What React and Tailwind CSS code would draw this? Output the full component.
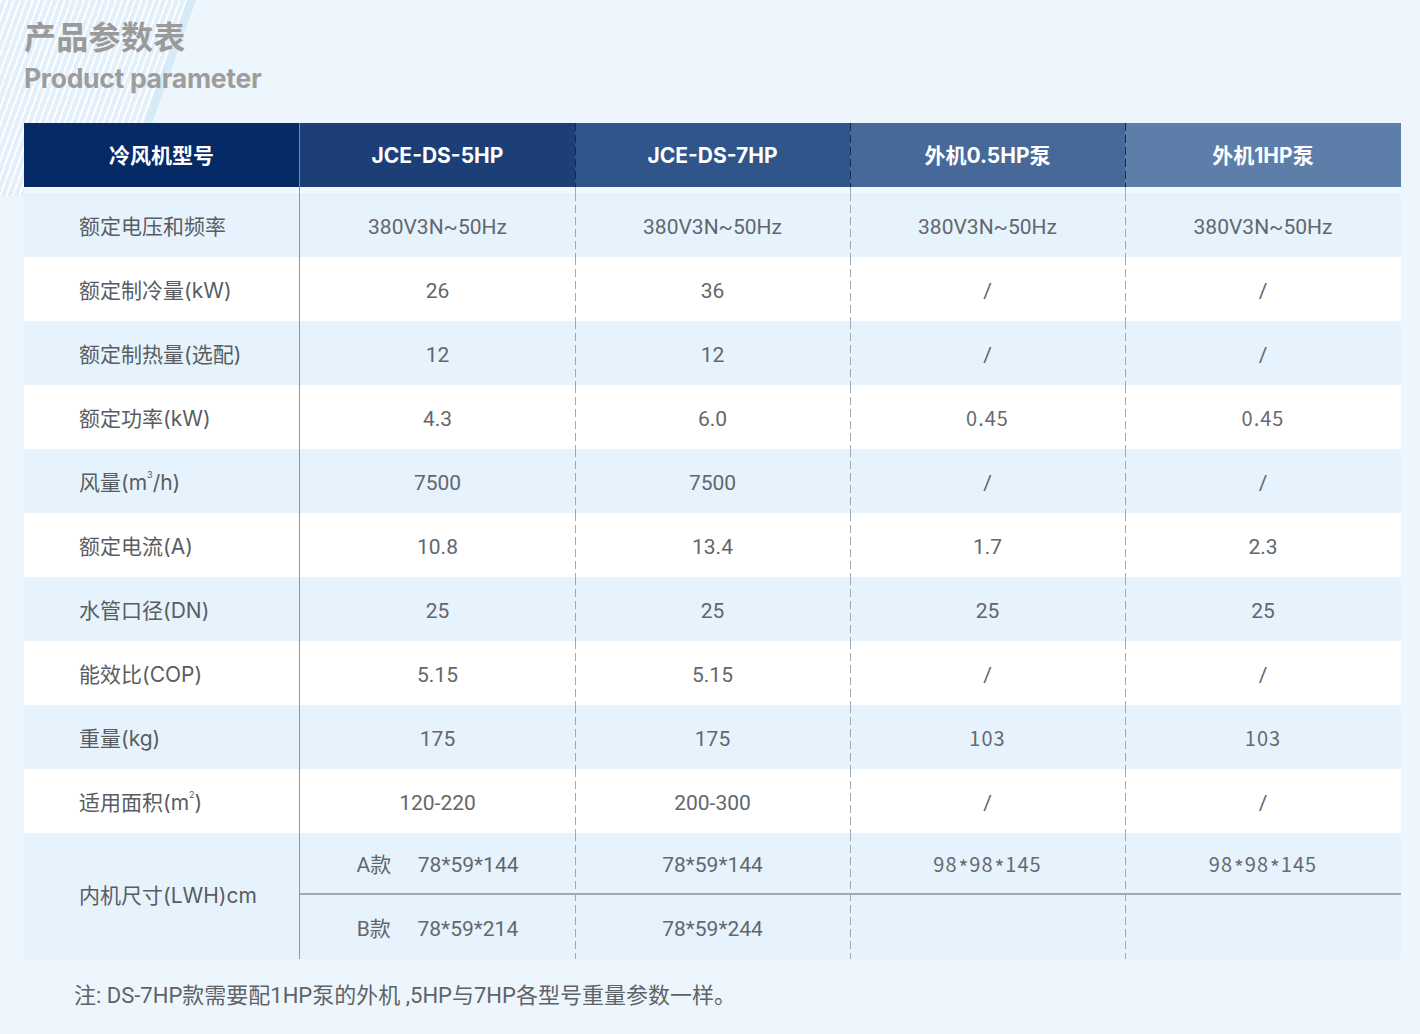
import React from "react";

const headers = ["冷风机型号", "JCE-DS-5HP", "JCE-DS-7HP", "外机0.5HP泵", "外机1HP泵"];
const headBg = ["bg-[#062a66]", "bg-[#1b3f76]", "bg-[#2f558a]", "bg-[#47699a]", "bg-[#5d7ea9]"];

// wide = values drawn in the wider CJK digit face in the picture
const rows = [
    { label: "额定电压和频率", cells: ["380V3N~50Hz", "380V3N~50Hz", "380V3N~50Hz", "380V3N~50Hz"] },
    { label: "额定制冷量(kW)", cells: ["26", "36", "/", "/"] },
    { label: "额定制热量(选配)", cells: ["12", "12", "/", "/"] },
    { label: "额定功率(kW)", cells: ["4.3", "6.0", "0.45", "0.45"], wide: [2, 3] },
    { label: <>风量(m<sup className="text-[9px] -top-[8px]">3</sup>/h)</>, cells: ["7500", "7500", "/", "/"] },
    { label: "额定电流(A)", cells: ["10.8", "13.4", "1.7", "2.3"] },
    { label: "水管口径(DN)", cells: ["25", "25", "25", "25"] },
    { label: "能效比(COP)", cells: ["5.15", "5.15", "/", "/"] },
    { label: "重量(kg)", cells: ["175", "175", "103", "103"], wide: [2, 3] },
    { label: <>适用面积(m<sup className="text-[9px] -top-[8px]">2</sup>)</>, cells: ["120-220", "200-300", "/", "/"] },
];

const cols = "grid grid-cols-[275px_276px_275px_275px_276px]";
const sepSolid = "border-l-[1.5px] border-solid border-[#8d96a1]";
// long dashes drawn as a 1px strip on the cell's left edge
const sepDash =
    "relative before:content-[''] before:absolute before:left-0 before:top-0 before:bottom-0 before:w-px before:bg-[repeating-linear-gradient(to_bottom,#a0a8b2_0_8px,transparent_8px_12px)]";
const sepDashHead =
    "relative before:content-[''] before:absolute before:left-0 before:top-0 before:bottom-0 before:w-px before:bg-[repeating-linear-gradient(to_bottom,#1a2945_0_8px,transparent_8px_12px)]";

function sep(i) {
    if (i === 0) return "";
    return i === 1 ? sepSolid : sepDash;
}

const valueFont = "pt-[6px] font-['Roboto','Noto_Sans_CJK_SC',sans-serif] text-[21px] text-[#62676d]";
const wideFont = "pt-[1px] font-['Noto_Sans_CJK_SC',sans-serif] text-[20px] tracking-[1px] text-[#666a70]";

function Dims({ parts }) {
    return (
        <>
            {parts.map((p, i) => (
                <React.Fragment key={i}>
                    {i > 0 && <span className="relative top-[4px] mx-[1px] text-[21px] tracking-[0px]">*</span>}
                    {p}
                </React.Fragment>
            ))}
        </>
    );
}

export default function App() {
    return (
        <div className="relative w-[1420px] h-[1034px] overflow-hidden bg-[#eef6fd] font-['Inter','Noto_Sans_CJK_SC',sans-serif] text-[#5f5f5f]">
            {/* striped decoration */}
            <div className="absolute left-0 top-0 w-[200px] h-[200px] [clip-path:polygon(0_0,196px_0,126px_196px,0_196px)] bg-[repeating-linear-gradient(110deg,rgba(255,255,255,0.85)_0_2px,rgba(214,232,246,0.45)_2px_6px)]" />
            <div className="absolute left-0 top-0 w-[200px] h-[200px] [clip-path:polygon(187px_0,196px_0,126px_196px,119px_196px)] bg-[#d6eaf7]" />

            <div className="relative px-[24px] pt-[18px]">
                <div className="text-[32px] leading-[40px] font-bold text-[#9a9a9a] tracking-[0.3px]">产品参数表</div>
                <div className="text-[26.5px] leading-[30px] font-bold text-[#9d9d9d] mt-[5px] tracking-[-0.3px]">Product parameter</div>

                <div className="mt-[30px] w-[1377px]">
                    {/* header */}
                    <div className={`${cols} h-[64px]`}>
                        {headers.map((h, i) => (
                            <div
                                key={i}
                                className={`${headBg[i]} flex items-center justify-center pt-[2px] text-white text-[21px] font-bold ${i === 1 ? "border-l-[1.5px] border-[#7f8a99]" : i > 1 ? sepDashHead : ""}`}
                            >
                                {h}
                            </div>
                        ))}
                    </div>
                    {/* gap below header */}
                    <div className={`${cols} h-[6px] bg-[#f1f8fe]`}>
                        {headers.map((_, i) => (
                            <div key={i} className={sep(i)} />
                        ))}
                    </div>

                    {rows.map((r, ri) => (
                        <div key={ri} className={`${cols} h-[64px] ${ri % 2 === 0 ? "bg-[#e6f3fd]" : "bg-white"}`}>
                            <div className="flex items-center pl-[55px] pt-[4px] text-[21px] text-[#595d62]">{r.label}</div>
                            {r.cells.map((c, ci) => (
                                <div
                                    key={ci}
                                    className={`${sep(ci + 1)} flex items-center justify-center ${r.wide && r.wide.includes(ci) ? wideFont : valueFont}`}
                                >
                                    {c}
                                </div>
                            ))}
                        </div>
                    ))}

                    {/* size row */}
                    <div className={`${cols} h-[126px] bg-[#e6f3fd]`}>
                        <div className="flex items-center pl-[55px] text-[21px] text-[#595d62]">内机尺寸(LWH)cm</div>
                        {[
                            ["A款\u2003 78*59*144", "B款\u2003 78*59*214"],
                            ["78*59*144", "78*59*244"],
                            [<Dims parts={["98", "98", "145"]} />, ""],
                            [<Dims parts={["98", "98", "145"]} />, ""],
                        ].map((pair, ci) => (
                            <div key={ci} className={`${sep(ci + 1)} flex flex-col`}>
                                <div
                                    className={`h-[62px] flex items-center justify-center border-b-2 border-[#a2a9b1] ${ci > 1 ? wideFont : valueFont}`}
                                >
                                    {pair[0]}
                                </div>
                                <div className={`flex-1 flex items-center justify-center ${valueFont}`}>{pair[1]}</div>
                            </div>
                        ))}
                    </div>
                </div>

                <div className="mt-[20px] pl-[50px] text-[22px] text-[#5f6368] font-['Roboto','Noto_Sans_CJK_SC',sans-serif]">
                    注: DS-7HP款需要配1HP泵的外机 ,5HP与7HP各型号重量参数一样。
                </div>
            </div>
        </div>
    );
}
